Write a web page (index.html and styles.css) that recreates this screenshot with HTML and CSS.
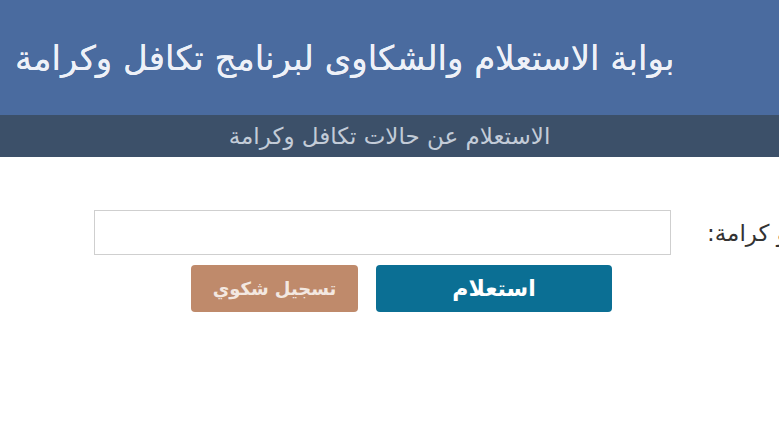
FILE: index.html
```html
<!DOCTYPE html>
<html lang="ar">
<head>
    <meta charset="UTF-8">
    <meta name="viewport" content="width=device-width, initial-scale=1.0">
    <title>بوابة الاستعلام والشكاوى</title>
    <link rel="stylesheet" href="styles.css">
</head>
<body>
    <div class="header">
        <h1 class="title" dir="rtl">بوابة الاستعلام والشكاوى لبرنامج تكافل وكرامة</h1>
    </div>
    <div class="subbar" dir="rtl">الاستعلام عن حالات تكافل وكرامة</div>

    <form class="inquiry" onsubmit="return false;">
        <div class="form-row">
            <input type="text" class="field" id="cardNo">
            <label for="cardNo" class="field-label" dir="rtl">رقم تكافل و كرامة:</label>
        </div>
        <div class="button-row">
            <button type="button" class="btn complaint-button" dir="rtl">تسجيل شكوي</button>
            <button type="submit" class="btn search-button" dir="rtl">استعلام</button>
        </div>
    </form>
</body>
</html>
```

FILE: styles.css
```css
html, body {
    margin: 0;
    padding: 0;
    overflow: hidden;
}
body {
    font-family: "DejaVu Sans", "Noto Sans", sans-serif;
    background-color: #ffffff;
    width: 779px;
}
.header {
    height: 115px;
    background-color: #4a6b9f;
    display: flex;
    align-items: center;
    padding-left: 15px;
    box-sizing: border-box;
}
.title {
    margin: 0;
    font-size: 34px;
    font-weight: normal;
    color: #eef1f8;
    white-space: nowrap;
    text-shadow: 0 0 0.6px #eef1f8;
}
.subbar {
    height: 42px;
    line-height: 42px;
    background-color: #3c5069;
    color: #c3ccd8;
    text-align: center;
    font-size: 23px;
}
.inquiry {
    padding-top: 53px;
}
.form-row {
    display: flex;
    align-items: center;
    padding-left: 94px;
    white-space: nowrap;
}
.field {
    width: 577px;
    height: 45px;
    border: 1px solid #cfcfcf;
    box-sizing: border-box;
    margin: 0;
    flex-shrink: 0;
}
.field-label {
    margin-left: 36px;
    font-size: 23px;
    color: #333333;
    flex-shrink: 0;
}
.button-row {
    display: flex;
    gap: 18px;
    padding-left: 191px;
    margin-top: 10px;
}
.btn {
    height: 47px;
    border: none;
    border-radius: 4px;
    color: #ffffff;
    font-family: "DejaVu Sans", sans-serif;
    font-weight: bold;
    cursor: pointer;
}
.complaint-button {
    width: 167px;
    background-color: #bf8a6b;
    font-size: 18px;
    color: #f3e8e1;
}
.search-button {
    width: 236px;
    background-color: #0b6f94;
    font-size: 22px;
}
```
